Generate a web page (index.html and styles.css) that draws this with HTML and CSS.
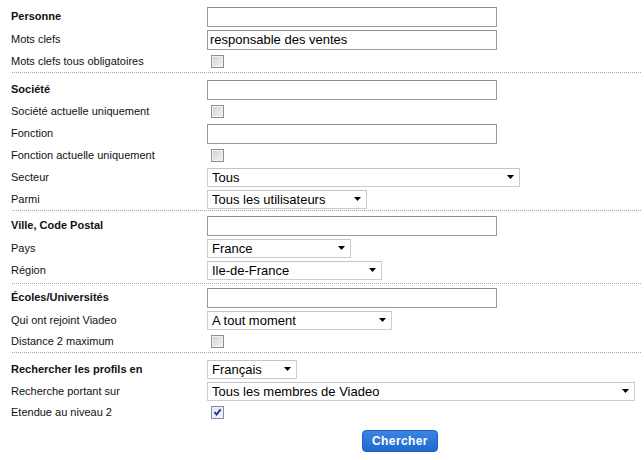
FILE: index.html
```html
<!DOCTYPE html>
<html lang="fr">
<head>
<meta charset="utf-8">
<title>Recherche avancée</title>
<link rel="stylesheet" href="styles.css">
</head>
<body>
<form class="search">
  <div class="section s1">
    <div class="row r-input"><span class="label strong">Personne</span><span class="field"></span></div>
    <div class="row r-input"><span class="label">Mots clefs</span><span class="field">responsable des ventes</span></div>
    <div class="row r-check"><span class="label">Mots clefs tous obligatoires</span><span class="check"></span></div>
  </div>
  <div class="section s2">
    <div class="row r-input"><span class="label strong">Société</span><span class="field"></span></div>
    <div class="row r-check"><span class="label">Société actuelle uniquement</span><span class="check"></span></div>
    <div class="row r-input"><span class="label">Fonction</span><span class="field"></span></div>
    <div class="row r-check"><span class="label">Fonction actuelle uniquement</span><span class="check"></span></div>
    <div class="row r-select"><span class="label">Secteur</span><span class="select w-secteur"><span class="val">Tous</span><svg class="arrow" width="7" height="4" viewBox="0 0 7 4"><path d="M0 0H7L3.5 4Z"/></svg></span></div>
    <div class="row r-select"><span class="label">Parmi</span><span class="select w-parmi"><span class="val">Tous les utilisateurs</span><svg class="arrow" width="7" height="4" viewBox="0 0 7 4"><path d="M0 0H7L3.5 4Z"/></svg></span></div>
  </div>
  <div class="section s3">
    <div class="row r-input"><span class="label strong">Ville, Code Postal</span><span class="field"></span></div>
    <div class="row r-select"><span class="label">Pays</span><span class="select w-pays"><span class="val">France</span><svg class="arrow" width="7" height="4" viewBox="0 0 7 4"><path d="M0 0H7L3.5 4Z"/></svg></span></div>
    <div class="row r-select"><span class="label">Région</span><span class="select w-region"><span class="val">Ile-de-France</span><svg class="arrow" width="7" height="4" viewBox="0 0 7 4"><path d="M0 0H7L3.5 4Z"/></svg></span></div>
  </div>
  <div class="section s4">
    <div class="row r-input"><span class="label strong">Écoles/Universités</span><span class="field"></span></div>
    <div class="row r-select"><span class="label">Qui ont rejoint Viadeo</span><span class="select w-qui"><span class="val">A tout moment</span><svg class="arrow" width="7" height="4" viewBox="0 0 7 4"><path d="M0 0H7L3.5 4Z"/></svg></span></div>
    <div class="row r-check"><span class="label">Distance 2 maximum</span><span class="check"></span></div>
  </div>
  <div class="section s5">
    <div class="row r-select"><span class="label strong">Rechercher les profils en</span><span class="select w-lang"><span class="val">Français</span><svg class="arrow" width="7" height="4" viewBox="0 0 7 4"><path d="M0 0H7L3.5 4Z"/></svg></span></div>
    <div class="row r-select"><span class="label">Recherche portant sur</span><span class="select w-portee"><span class="val">Tous les membres de Viadeo</span><svg class="arrow" width="7" height="4" viewBox="0 0 7 4"><path d="M0 0H7L3.5 4Z"/></svg></span></div>
    <div class="row r-check"><span class="label">Etendue au niveau 2</span><span class="check checked"><svg width="9" height="9" viewBox="0 0 9 9"><path d="M1.5 4.2L3.6 6.6L7.6 1.4" fill="none" stroke="#1f2f8c" stroke-width="1.8"/></svg></span></div>
  </div>
  <div class="actions"><span class="btn">Chercher</span></div>
</form>
</body>
</html>
```
FILE: styles.css
```css
html, body {
  margin: 0;
  padding: 0;
  background: #fff;
}
body {
  font-family: "Liberation Sans", Arial, sans-serif;
  color: #111;
}
.search {
  width: 644px;
  box-sizing: border-box;
  padding: 0 3px 0 11px;
}
.section {
  border-bottom: 1px dotted #a8a8a8;
  margin-left: 1px;
}
.section .row {
  margin-left: -1px;
}
.s1 { padding-top: 5px; }
.s2 { padding-top: 5px; }
.s3 { padding-top: 3px; padding-bottom: 2px; }
.s4 { padding-top: 2px; }
.s5 { padding-top: 5px; border-bottom: none; }
.row {
  display: grid;
  grid-template-columns: 196px auto;
  align-items: center;
  justify-items: start;
}
.r-input { height: 23px; }
.r-select { height: 22px; }
.r-check { height: 21px; }
.label {
  font-size: 11px;
  line-height: 13px;
}
.strong {
  font-weight: bold;
}
.field {
  box-sizing: border-box;
  width: 290px;
  height: 20px;
  border: 1px solid #9a9a9a;
  border-top-color: #8a8a8a;
  background: #fff;
  font-size: 13px;
  line-height: 18px;
  padding-left: 2px;
  color: #000;
}
.select {
  box-sizing: border-box;
  height: 19px;
  border: 1px solid #cdcdcd;
  border-top-color: #c4c4c4;
  background: #fff;
  display: flex;
  align-items: center;
  justify-content: space-between;
  padding: 0 5px 0 4px;
  font-size: 13px;
  color: #000;
}
.val {
  line-height: 17px;
}
.arrow {
  display: block;
  fill: #000;
}
.w-secteur { width: 313px; }
.w-parmi { width: 160px; }
.w-pays { width: 144px; }
.w-region { width: 175px; }
.w-qui { width: 185px; }
.w-lang { width: 90px; }
.w-portee { width: 428px; }
.check {
  box-sizing: border-box;
  width: 13px;
  height: 13px;
  margin-left: 4px;
  border: 1px solid #8f8f8f;
  background: linear-gradient(135deg, #cfcfcf 0%, #e6e6e6 60%, #f4f4f4 100%);
  box-shadow: inset 0 0 0 1px #f2f2f2;
  display: flex;
  align-items: center;
  justify-content: center;
}
.checked {
  border-color: #7c8eb0;
  background: linear-gradient(135deg, #dfe4ee 0%, #f3f4f8 100%);
  box-shadow: inset 0 0 0 1px #eef0f5;
}
.checked svg {
  display: block;
}
.actions {
  display: flex;
  justify-content: flex-start;
  padding: 7px 0 0 351px;
}
.btn {
  box-sizing: border-box;
  width: 76px;
  height: 22px;
  border: 1px solid #1d5fbf;
  border-radius: 4px;
  background: linear-gradient(#3a85e2, #2068cf);
  color: #fff;
  font-weight: bold;
  font-size: 12px;
  letter-spacing: 0.4px;
  display: flex;
  align-items: center;
  justify-content: center;
}
```
